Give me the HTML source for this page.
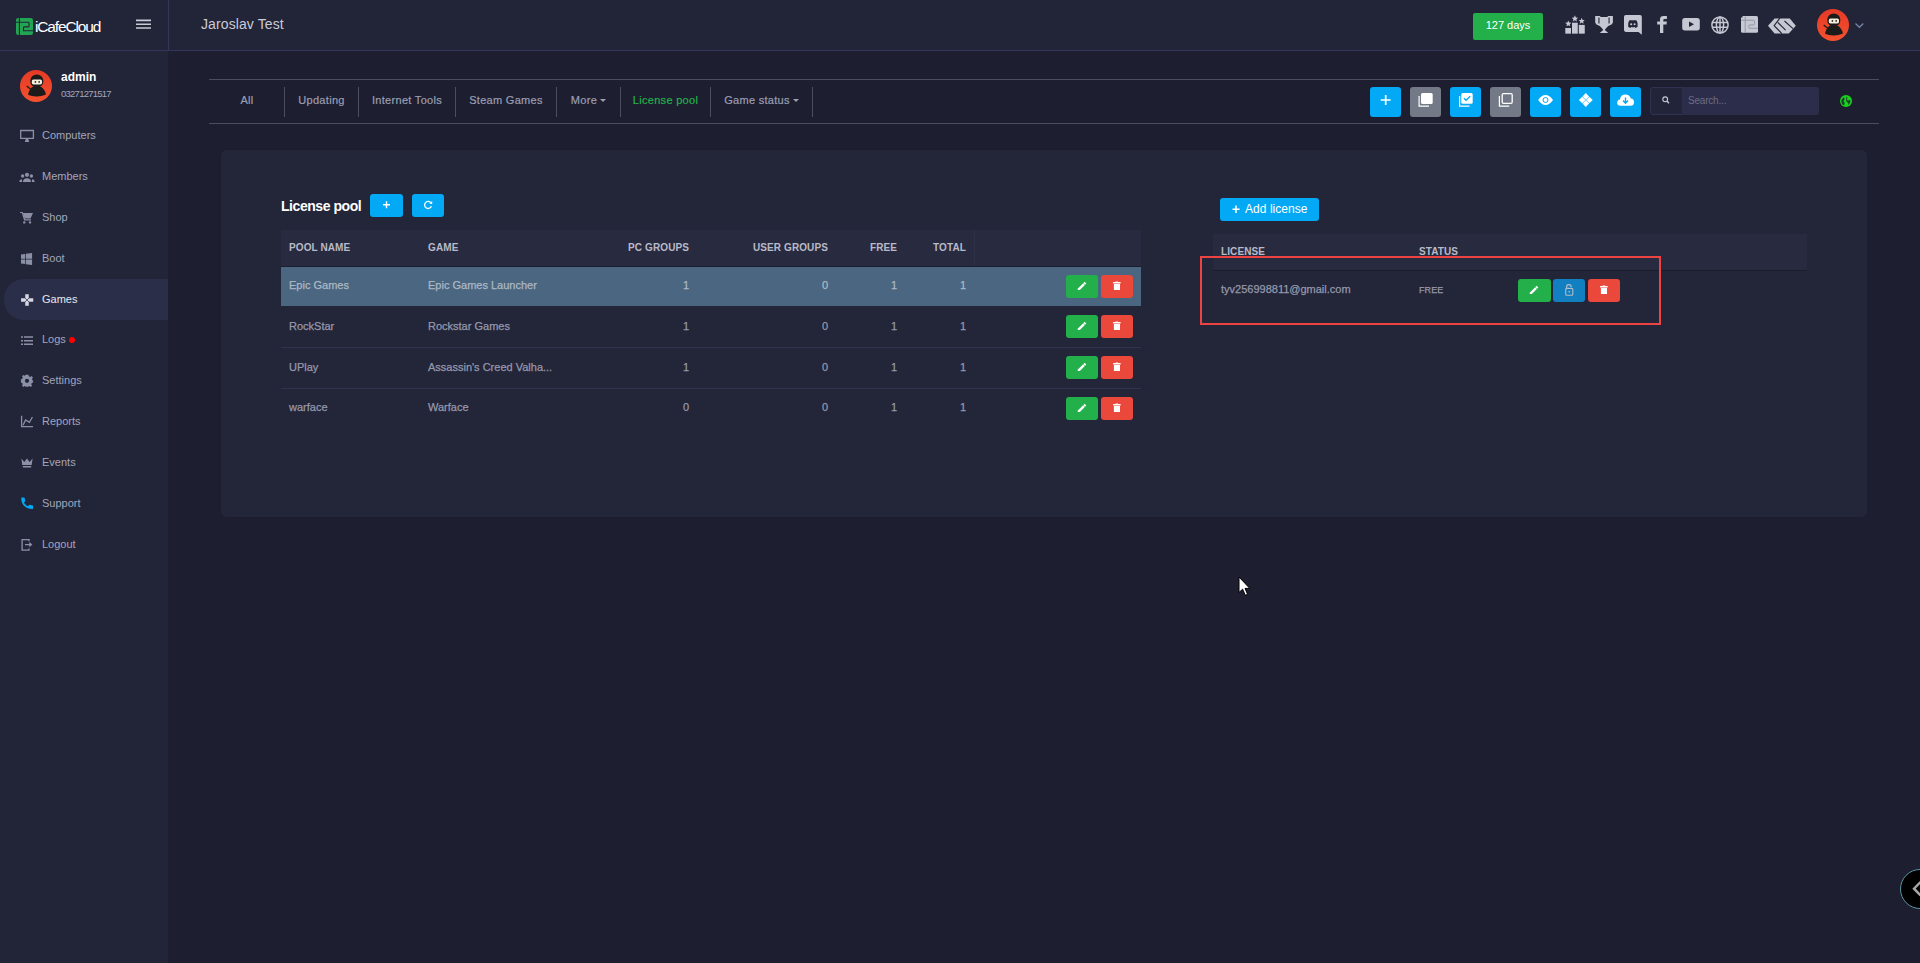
<!DOCTYPE html>
<html><head><meta charset="utf-8"><style>
*{box-sizing:border-box;margin:0;padding:0}
html,body{width:1920px;height:963px;overflow:hidden;background:#1d1e2f;font-family:"Liberation Sans",sans-serif}
.abs{position:absolute}
svg{position:absolute;overflow:visible}
#header{position:absolute;left:0;top:0;width:1920px;height:51px;background:#222438;border-bottom:1px solid #33355a}
#hdiv{position:absolute;left:168px;top:0;width:1px;height:50px;background:#33355a}
#sidebar{position:absolute;left:0;top:51px;width:168px;height:912px;background:#222438}
.nav{position:absolute;left:0;width:168px;height:41px;color:#a3a6ba;font-size:11px}
.nav .tx{position:absolute;left:42px;top:0;line-height:41px}
.nav.active{left:4px;width:164px;background:#2b2e48;border-radius:20px 0 0 20px;color:#e8e9f0}
.nav.active .tx{left:38px}
.tab{position:absolute;top:80px;height:43px;line-height:41px;text-align:center;color:#9c9fb3;font-size:11px;letter-spacing:0.3px;-webkit-text-stroke:0.2px currentColor}
.tdiv{position:absolute;top:87px;width:1px;height:30px;background:#4a4c5f}
.tbtn{position:absolute;top:87px;width:31px;height:30px;border-radius:3px;background:#03a9f4}
.tbtn.g{background:#737987}
#card{position:absolute;left:221px;top:150px;width:1646px;height:367px;background:#232538;border-radius:5px;box-shadow:0 0 2px rgba(0,0,0,0.08)}
.btn{position:absolute;height:23px;border-radius:3px}
.bg{background:#23b04a}
.br{background:#e9483a}
.bb{background:#03a9f4}
.th{position:absolute;font-weight:bold;font-size:10px;color:#b8bac8;letter-spacing:0.1px;line-height:12px}
.td{position:absolute;font-size:11px;color:#9598ac;line-height:14px;-webkit-text-stroke:0.25px currentColor}
</style></head><body>
<div id="header"></div><div id="hdiv"></div><div id="sidebar"></div>
<svg style="left:16px;top:18px" width="17" height="17" viewBox="0 0 17 17">
<rect x="0" y="0" width="17" height="17" rx="2.2" fill="#22a552"/>
<path d="M3.4 0V17 M0 4.2H12.3Q13 4.2 13 5V8.2Q13 8.9 12.3 8.9H8.2Q7.5 8.9 7.5 9.6V12.7H17" stroke="#222438" stroke-width="1.1" fill="none"/>
</svg>
<div class="abs" style="left:35px;top:15.5px;font-size:15.5px;color:#fff;letter-spacing:-1.15px;line-height:22px">iCafeCloud</div>
<svg style="left:136px;top:18px" width="15" height="12" viewBox="0 0 15 12"><path d="M0 2.4H15M0 6.2H15M0 10H15" stroke="#c9cad3" stroke-width="1.6"/></svg>
<div class="abs" style="left:201px;top:15px;font-size:14px;color:#c9cbd6;line-height:18px;letter-spacing:0.1px">Jaroslav Test</div>
<div class="abs" style="left:1473px;top:13px;width:70px;height:27px;background:#23b04a;border-radius:2px;color:#fff;font-size:11px;line-height:25px;text-align:center">127 days</div>
<svg style="left:1562px;top:12px" width="26" height="24" viewBox="0 0 26 24" fill="#c5c8d2">
<rect x="3.3" y="16" width="5.7" height="5.65"/><rect x="10" y="10.7" width="5.75" height="10.95"/><rect x="16.8" y="12.9" width="5.95" height="8.75"/>
<path transform="translate(6.3,11.6) scale(0.9)" d="M0-3.5L1 -1.1 3.4-1 1.6 0.6 2.1 3 0 1.8 -2.1 3 -1.6 0.6 -3.4-1 -1-1.1Z"/>
<path transform="translate(12.9,6.6) scale(0.95)" d="M0-3.5L1 -1.1 3.4-1 1.6 0.6 2.1 3 0 1.8 -2.1 3 -1.6 0.6 -3.4-1 -1-1.1Z"/>
<path transform="translate(19.7,9) scale(0.9)" d="M0-3.5L1 -1.1 3.4-1 1.6 0.6 2.1 3 0 1.8 -2.1 3 -1.6 0.6 -3.4-1 -1-1.1Z"/>
</svg>
<svg style="left:1595px;top:15px" width="19" height="19" viewBox="0 0 19 19" fill="#c5c8d2">
<path fill-rule="evenodd" d="M0.2 1H5Q5.3 2 6 2H12Q12.7 2 13 1H17.9V7.5Q17.2 9.8 15 10.2Q13 10.5 11.8 12.5L10 14.6V15.2L12.8 17.5V18H5.2V17.5L8 15.2V14.6L6.2 12.5Q5 10.5 3 10.2Q0.8 9.8 0.2 7.5Z M3.4 2.6H4.5V8.5H3.4Z M13.5 2.6H14.6V8.5H13.5Z"/>
</svg>
<svg style="left:1624px;top:15px" width="19" height="20" viewBox="0 0 19 20">
<path d="M1.8 0H16Q17.8 0 17.8 1.8V19.7L14.5 16.9H1.8Q0 16.9 0 15.1V1.8Q0 0 1.8 0Z" fill="#c5c8d2"/>
<path d="M4.2 11.8Q3.6 8 5.2 5.6Q6.6 4.9 7.3 4.9L7.6 5.5Q8.9 5.2 10.2 5.5L10.5 4.9Q11.2 4.9 12.6 5.6Q14.2 8 13.6 11.8Q12.4 12.8 11.3 12.9L10.8 12.1Q9 12.6 7 12.1L6.5 12.9Q5.4 12.8 4.2 11.8Z" fill="#222438"/>
<circle cx="7.2" cy="9.2" r="1.05" fill="#c5c8d2"/><circle cx="10.6" cy="9.2" r="1.05" fill="#c5c8d2"/>
</svg>
<svg style="left:1657px;top:15px" width="11" height="19" viewBox="0 0 11 19">
<path d="M3 18V9.5H0.2V6.5H3V4.3Q3 0.9 6.6 0.9H9.9V3.9H7.5Q6.3 3.9 6.3 5V6.5H9.9L9.5 9.5H6.3V18Z" fill="#c5c8d2"/>
</svg>
<svg style="left:1682px;top:18px" width="18" height="13" viewBox="0 0 18 13">
<rect x="0.2" y="0.1" width="17.6" height="12.3" rx="2.6" fill="#c5c8d2"/>
<path d="M7 3.6L12 6.3 7 8.9Z" fill="#222438"/>
</svg>
<svg style="left:1711px;top:15.5px" width="18" height="18" viewBox="0 0 18 18" fill="none" stroke="#c5c8d2" stroke-width="1.5">
<circle cx="9" cy="9" r="8.1"/><ellipse cx="9" cy="9" rx="3.6" ry="8.1"/><path d="M9 1V17M1.2 6.6H16.8M1.2 11.2H16.8"/>
</svg>
<svg style="left:1740.5px;top:16.2px" width="17" height="17" viewBox="0 0 17 17">
<rect x="0" y="0" width="17" height="16.7" rx="1.5" fill="#c5c8d2"/>
<path d="M4.2 0.6V17 M0 4.2H12.3Q13.5 4.2 13.5 5.5V7.6Q13.5 8.9 12.3 8.9H9Q7.8 8.9 7.8 10V11.3Q7.8 12.3 9 12.3H17" stroke="#8f919e" stroke-width="0.9" fill="none"/>
<path d="M0 0.1L1.5 0.1 1.5 1.5 0 1.5Z" fill="#222438"/>
</svg>
<svg style="left:1768px;top:17.5px" width="28" height="16" viewBox="0 0 28 16" fill="#c5c8d2">
<path d="M0 7.8L6.6 0.5H21.8L27.8 7.8 20.8 15.4H6.6Z"/>
<path d="M11.9 0.2L6.1 7.6 13.9 15.6M9.8 4.4L17.6 12.2M16.5 3L25 10.6" stroke="#222438" stroke-width="1.1" fill="none"/>
</svg>
<svg style="left:1817px;top:9px" width="32" height="32" viewBox="0 0 32 32">
<defs><linearGradient id="rg1817" x1="0" y1="0" x2="0" y2="1"><stop offset="0" stop-color="#e63a26"/><stop offset="1" stop-color="#f4512f"/></linearGradient></defs>
<circle cx="16" cy="16" r="16" fill="url(#rg1817)"/>
<path d="M6.7 16L11 19.5" stroke="#1b1b1b" stroke-width="1.3"/>
<path d="M12.2 17Q16.8 15.6 21.3 17Q25 19.5 26 24.5Q21 26.8 16.5 26.6Q11.5 26.6 8 24.8Q9 19.5 12.2 17Z" fill="#1b1b1b"/>
<circle cx="16.8" cy="11" r="6.6" fill="#1b1b1b"/>
<rect x="11.8" y="9.4" width="10.2" height="5" rx="1.6" fill="#f6eedc"/>
<circle cx="15.4" cy="11.9" r="0.85" fill="#222"/><circle cx="19.2" cy="11.9" r="0.85" fill="#222"/>
</svg>
<svg style="left:1855px;top:23px" width="9" height="5" viewBox="0 0 9 5"><path d="M0.5 0.5L4.4 4.3 8.3 0.5" stroke="#7b86a8" stroke-width="1.2" fill="none"/></svg>
<svg style="left:20px;top:70px" width="32" height="32" viewBox="0 0 32 32">
<defs><linearGradient id="rg20" x1="0" y1="0" x2="0" y2="1"><stop offset="0" stop-color="#e63a26"/><stop offset="1" stop-color="#f4512f"/></linearGradient></defs>
<circle cx="16" cy="16" r="16" fill="url(#rg20)"/>
<path d="M6.7 16L11 19.5" stroke="#1b1b1b" stroke-width="1.3"/>
<path d="M12.2 17Q16.8 15.6 21.3 17Q25 19.5 26 24.5Q21 26.8 16.5 26.6Q11.5 26.6 8 24.8Q9 19.5 12.2 17Z" fill="#1b1b1b"/>
<circle cx="16.8" cy="11" r="6.6" fill="#1b1b1b"/>
<rect x="11.8" y="9.4" width="10.2" height="5" rx="1.6" fill="#f6eedc"/>
<circle cx="15.4" cy="11.9" r="0.85" fill="#222"/><circle cx="19.2" cy="11.9" r="0.85" fill="#222"/>
</svg>
<div class="abs" style="left:61px;top:70px;font-size:12px;font-weight:bold;color:#fff;line-height:14px">admin</div>
<div class="abs" style="left:61px;top:88px;font-size:9.5px;color:#a3a6ba;line-height:12px;letter-spacing:-0.75px">03271271517</div>
<div class="nav" style="top:115px"><div class="tx">Computers</div></div>
<svg style="left:16px;top:125px" width="24" height="24" viewBox="0 0 24 24"><path d="M4.7 5.5H17.4V13.4H4.7Z" stroke="#8c90a6" stroke-width="1.3" fill="none"/><path d="M9.8 14H12.2L13.2 17H8.8Z" fill="#8c90a6"/></svg>
<div class="nav" style="top:156px"><div class="tx">Members</div></div>
<svg style="left:16px;top:165px" width="24" height="24" viewBox="0 0 24 24"><circle cx="11" cy="9.8" r="2.1" fill="#8c90a6"/><circle cx="6.6" cy="11" r="1.7" fill="#8c90a6"/><circle cx="15.4" cy="11" r="1.7" fill="#8c90a6"/><path d="M7 17Q7 13.3 11 13.3Q15 13.3 15 17Z M3.3 17Q3.5 14.3 5.8 14.3L6.2 17Z M18.7 17Q18.5 14.3 16.2 14.3L15.8 17Z" fill="#8c90a6"/></svg>
<div class="nav" style="top:197px"><div class="tx">Shop</div></div>
<svg style="left:16px;top:206px" width="24" height="24" viewBox="0 0 24 24"><path d="M4 6.5H6.3L8.6 13.8H15" stroke="#8c90a6" stroke-width="1.2" fill="none"/><path d="M6.8 7H17L14.5 12.4H8.6Z" fill="#8c90a6"/><circle cx="8.3" cy="16.4" r="1.2" fill="#8c90a6"/><circle cx="14" cy="16.4" r="1.2" fill="#8c90a6"/></svg>
<div class="nav" style="top:238px"><div class="tx">Boot</div></div>
<svg style="left:16px;top:247px" width="24" height="24" viewBox="0 0 24 24"><path d="M5 7.4L9.1 6.9V11.7H5Z M9.8 6.8L16.1 6V11.7H9.8Z M5 12.4H9.1V17.1L5 16.6Z M9.8 12.4H16.1V18L9.8 17.2Z" fill="#8c90a6"/></svg>
<div class="nav active" style="top:279px"><div class="tx">Games</div></div>
<svg style="left:16px;top:288px" width="24" height="24" viewBox="0 0 24 24"><g transform="translate(11,12) scale(0.93) translate(-11,-12)"><path d="M9.1 5.8H12.9V10.1L11 12 9.1 10.1Z M9.1 18.1H12.9V13.9L11 12 9.1 13.9Z M4.6 10.1H9.1L11 12 9.1 13.9H4.6Z M17.7 10.1H12.9L11 12 12.9 13.9H17.7Z" fill="#d5d7e2"/><path d="M8.6 9.6L13.4 14.4M13.4 9.6L8.6 14.4" stroke="#2b2e48" stroke-width="0.8"/></g></svg>
<div class="nav" style="top:319px"><div class="tx">Logs</div></div>
<svg style="left:16px;top:328px" width="24" height="24" viewBox="0 0 24 24"><path d="M5 9.1H7M8 9.1H17M5 12.7H7M8 12.7H17M5 16.2H7M8 16.2H17" stroke="#8c90a6" stroke-width="1.5"/></svg>
<div class="nav" style="top:360px"><div class="tx">Settings</div></div>
<svg style="left:16px;top:369px" width="24" height="24" viewBox="0 0 24 24"><g transform="translate(11,11.8)"><path fill-rule="evenodd" fill="#8c90a6" d="M-1.5-6H1.5L1.8-4.5 3.3-3.8 4.6-4.8 6-3.2 5-2 5.6-0.3 6.1 0V1.8L4.7 2.2 4.3 3.6 5.1 4.9 3.6 6.1 2.4 5.3 1.5 5.8 1.2 6H-1.2L-1.6 5.6-2.5 5.2-3.6 6.1-5.1 4.8-4.3 3.6-4.8 2.1-6.1 1.8V-1.5L-4.8-1.9-4.2-3.3-5-4.6-3.5-5.9-2.3-5.1-1.8-5.4Z M0-2.1A2.1 2.1 0 1 0 0 2.1A2.1 2.1 0 1 0 0-2.1Z"/></g></svg>
<div class="nav" style="top:401px"><div class="tx">Reports</div></div>
<svg style="left:16px;top:410px" width="24" height="24" viewBox="0 0 24 24"><path d="M5.6 5.8V16.6H17" stroke="#8c90a6" stroke-width="1.3" fill="none"/><path d="M7 15.2L9.6 9.9 13.4 12.3 16.4 7" stroke="#8c90a6" stroke-width="1.3" fill="none"/></svg>
<div class="nav" style="top:442px"><div class="tx">Events</div></div>
<svg style="left:16px;top:451px" width="24" height="24" viewBox="0 0 24 24"><path d="M5.4 7.6L8.3 11 11 7.6 13.6 11 16.6 7.6 15.7 14H6.2Z M6.8 14.9H15.2V16.6H6.8Z" fill="#8c90a6"/></svg>
<div class="nav" style="top:483px"><div class="tx">Support</div></div>
<svg style="left:16px;top:492px" width="24" height="24" viewBox="0 0 24 24"><path d="M5.2 6.2Q5 5.6 5.8 5.6H8.5L9.3 9.3 7.9 10.5Q9.1 13.2 12 14.3L13.3 12.8 17 13.6V16.4Q17 17.1 16.3 17.1Q10.7 17 7.3 13.1Q5.1 10.3 5.2 6.2Z" fill="#03a9f4"/></svg>
<div class="nav" style="top:524px"><div class="tx">Logout</div></div>
<svg style="left:16px;top:533px" width="24" height="24" viewBox="0 0 24 24"><path d="M13 8.2V6.6H6.1V17.2H13V15.6" stroke="#8c90a6" stroke-width="1.3" fill="none"/><path d="M9 10.9H13.3V9L16.4 11.6 13.3 14.2V12.3H9Z" fill="#8c90a6"/></svg>
<div class="abs" style="left:69px;top:337px;width:6px;height:6px;border-radius:50%;background:#f00"></div>
<div class="abs" style="left:209px;top:79px;width:1670px;height:1px;background:#4a4c5f"></div>
<div class="abs" style="left:209px;top:123px;width:1670px;height:1px;background:#4a4c5f"></div>
<div class="tab" style="left:210px;width:74px">All</div>
<div class="tdiv" style="left:284px"></div>
<div class="tab" style="left:285px;width:73px">Updating</div>
<div class="tdiv" style="left:358px"></div>
<div class="tab" style="left:359px;width:96px">Internet Tools</div>
<div class="tdiv" style="left:455px"></div>
<div class="tab" style="left:456px;width:100px">Steam Games</div>
<div class="tdiv" style="left:556px"></div>
<div class="tab" style="left:557px;width:63px">More<span style="display:inline-block;width:0;height:0;border-left:3px solid transparent;border-right:3px solid transparent;border-top:3px solid #9c9fb3;margin-left:3px;vertical-align:2px"></span></div>
<div class="tdiv" style="left:620px"></div>
<div class="tab" style="left:621px;width:89px;color:#22b14c">License pool</div>
<div class="tdiv" style="left:710px"></div>
<div class="tab" style="left:711px;width:101px">Game status<span style="display:inline-block;width:0;height:0;border-left:3px solid transparent;border-right:3px solid transparent;border-top:3px solid #9c9fb3;margin-left:3px;vertical-align:2px"></span></div>
<div class="tdiv" style="left:812px"></div>
<div class="tbtn " style="left:1370px"><svg style="left:0;top:0" width="31" height="30" viewBox="0 0 31 30"><path d="M15.7 8V18M10.7 13H20.7" stroke="#fff" stroke-width="1.7"/></svg></div>
<div class="tbtn g" style="left:1410px"><svg style="left:0;top:0" width="31" height="30" viewBox="0 0 31 30"><path d="M9.1 9V19.1H19" stroke="#fff" stroke-width="1.2" fill="none"/><rect x="11" y="6" width="11.7" height="11" rx="1.5" fill="#fff"/></svg></div>
<div class="tbtn " style="left:1450px"><svg style="left:0;top:0" width="31" height="30" viewBox="0 0 31 30"><path d="M9.6 9V19.1H19.5" stroke="#fff" stroke-width="1.2" fill="none"/><rect x="11.3" y="6" width="11.4" height="10.8" rx="1.5" fill="#fff"/><path d="M13.9 11.3L16 13.3 20.3 9.2" stroke="#03a9f4" stroke-width="1.2" fill="none"/></svg></div>
<div class="tbtn g" style="left:1490px"><svg style="left:0;top:0" width="31" height="30" viewBox="0 0 31 30"><path d="M9.4 9V19.1H19.2" stroke="#fff" stroke-width="1.2" fill="none"/><rect x="12.2" y="6.7" width="10" height="9.6" rx="1.2" stroke="#fff" stroke-width="1.3" fill="none"/></svg></div>
<div class="tbtn " style="left:1530px"><svg style="left:0;top:0" width="31" height="30" viewBox="0 0 31 30"><path d="M8.2 13Q11.5 8 15.5 8Q19.5 8 23 13Q19.5 18 15.5 18Q11.5 18 8.2 13Z" fill="#fff"/><circle cx="15.5" cy="13" r="2.5" stroke="#03a9f4" stroke-width="1" fill="none"/></svg></div>
<div class="tbtn " style="left:1570px"><svg style="left:0;top:0" width="31" height="30" viewBox="0 0 31 30"><path d="M15.8 6.1L19.1 9.4 15.8 12.7 12.5 9.4Z M15.8 13.3L19.1 16.6 15.8 19.9 12.5 16.6Z M12.2 9.7L15.5 13 12.2 16.3 8.9 13Z M19.4 9.7L22.7 13 19.4 16.3 16.1 13Z" fill="#fff"/></svg></div>
<div class="tbtn " style="left:1610px"><svg style="left:0;top:0" width="31" height="30" viewBox="0 0 31 30"><path d="M10.5 18.8Q7.2 18.8 7.2 15.8Q7.2 13 10 12.6Q10.6 7.5 15.5 7.5Q19.5 7.5 20.8 11.5Q24 11.8 24 15.2Q24 18.8 20.5 18.8Z" fill="#fff"/><path d="M15.5 10.5V15.8M13 13.6L15.5 16.2 18 13.6" stroke="#03a9f4" stroke-width="1.4" fill="none"/></svg></div>
<div class="abs" style="left:1650px;top:87px;width:169px;height:28px;border:1px solid #303251;border-radius:3px;background:#22243a"></div>
<div class="abs" style="left:1682px;top:87px;width:137px;height:28px;background:#2b2d4b;border-radius:0 3px 3px 0"></div>
<svg style="left:1660px;top:94px" width="12" height="12" viewBox="0 0 12 12"><circle cx="5.2" cy="5.3" r="2.4" stroke="#c9cbd6" stroke-width="1.1" fill="none"/><path d="M6.9 7L9 9.2" stroke="#c9cbd6" stroke-width="1.3"/></svg>
<div class="abs" style="left:1688px;top:94px;font-size:10px;color:#6b6d82;line-height:14px;letter-spacing:-0.2px">Search...</div>
<svg style="left:1840px;top:95px" width="12" height="12" viewBox="0 0 12 12"><circle cx="6" cy="6" r="6" fill="#18d418"/><path d="M3.5 2.2Q5 3 4.6 4.6Q3.2 5.2 3.8 6.6Q5 7.5 4.6 9.6L3 10.2Q1 8 1.3 5Z M6.5 1.5Q8 2.5 7.3 3.6Q6.3 4.3 7.5 5.5Q9 5.8 9.8 4.8L10.5 6Q10.3 8.5 8.3 10.3Q8.8 8 7.3 7.3Q6 6.5 6 4.8Z" fill="#222438" opacity="0.85"/></svg>
<div id="card"></div>
<div class="abs" style="left:281px;top:197px;font-size:14px;font-weight:bold;color:#fff;letter-spacing:-0.45px;line-height:18px">License pool</div>
<div class="btn bb" style="left:370px;top:194px;width:33px"><svg style="left:0;top:0" width="33" height="23" viewBox="0 0 33 23"><path d="M16.5 7.2V14.2M13 10.7H20" stroke="#fff" stroke-width="1.4"/></svg></div>
<div class="btn bb" style="left:412px;top:194px;width:32px"><svg style="left:0;top:0" width="32" height="23" viewBox="0 0 32 23"><path d="M18.7 8.6A3.5 3.5 0 1 0 19.4 12.2" stroke="#fff" stroke-width="1.3" fill="none"/><path d="M17.3 9.8L20.2 7 20.2 10.1Z" fill="#fff"/></svg></div>
<div class="abs" style="left:281px;top:230px;width:860px;height:36px;background:#282a3f"></div>
<div class="abs" style="left:974px;top:230px;width:1px;height:36px;background:#2e3046"></div>
<div class="abs" style="left:281px;top:266px;width:860px;height:1px;background:#1c1d2c"></div>
<div class="abs" style="left:281px;top:267px;width:860px;height:39px;background:#4a6680"></div>
<div class="abs" style="left:281px;top:347px;width:860px;height:1px;background:#31334f"></div>
<div class="abs" style="left:281px;top:388px;width:860px;height:1px;background:#31334f"></div>
<div class="th" style="left:289px;top:242px">POOL NAME</div>
<div class="th" style="left:428px;top:242px">GAME</div>
<div class="th" style="left:569px;width:120px;top:242px;text-align:right">PC GROUPS</div>
<div class="th" style="left:708px;width:120px;top:242px;text-align:right">USER GROUPS</div>
<div class="th" style="left:777px;width:120px;top:242px;text-align:right">FREE</div>
<div class="th" style="left:846px;width:120px;top:242px;text-align:right">TOTAL</div>
<div class="td" style="left:289px;top:278px;color:#adb8c5">Epic Games</div>
<div class="td" style="left:428px;top:278px;color:#adb8c5">Epic Games Launcher</div>
<div class="td" style="left:629px;width:60px;text-align:right;top:278px;color:#adb8c5">1</div>
<div class="td" style="left:768px;width:60px;text-align:right;top:278px;color:#adb8c5">0</div>
<div class="td" style="left:837px;width:60px;text-align:right;top:278px;color:#adb8c5">1</div>
<div class="td" style="left:906px;width:60px;text-align:right;top:278px;color:#adb8c5">1</div>
<div class="btn bg" style="left:1066px;top:275px;width:32px"><svg style="left:0;top:0" width="32" height="23" viewBox="0 0 32 23"><path d="M11.6 15.1L12.1 13.2 18.6 6.7 20.3 8.4 13.8 14.9Z" fill="#fff"/><path d="M17.2 8.1L18.9 9.8" stroke="#23b04a" stroke-width="0.6"/></svg></div>
<div class="btn br" style="left:1101px;top:275px;width:32px"><svg style="left:0;top:0" width="32" height="23" viewBox="0 0 32 23"><path d="M12.1 7.1H19.6V8.5H12.1Z M12.9 9H19V15H12.9Z M14.6 6.5H17.1V7.1H14.6Z" fill="#fff"/></svg></div>
<div class="td" style="left:289px;top:319px;color:#9598ac">RockStar</div>
<div class="td" style="left:428px;top:319px;color:#9598ac">Rockstar Games</div>
<div class="td" style="left:629px;width:60px;text-align:right;top:319px;color:#9598ac">1</div>
<div class="td" style="left:768px;width:60px;text-align:right;top:319px;color:#9598ac">0</div>
<div class="td" style="left:837px;width:60px;text-align:right;top:319px;color:#9598ac">1</div>
<div class="td" style="left:906px;width:60px;text-align:right;top:319px;color:#9598ac">1</div>
<div class="btn bg" style="left:1066px;top:315px;width:32px"><svg style="left:0;top:0" width="32" height="23" viewBox="0 0 32 23"><path d="M11.6 15.1L12.1 13.2 18.6 6.7 20.3 8.4 13.8 14.9Z" fill="#fff"/><path d="M17.2 8.1L18.9 9.8" stroke="#23b04a" stroke-width="0.6"/></svg></div>
<div class="btn br" style="left:1101px;top:315px;width:32px"><svg style="left:0;top:0" width="32" height="23" viewBox="0 0 32 23"><path d="M12.1 7.1H19.6V8.5H12.1Z M12.9 9H19V15H12.9Z M14.6 6.5H17.1V7.1H14.6Z" fill="#fff"/></svg></div>
<div class="td" style="left:289px;top:360px;color:#9598ac">UPlay</div>
<div class="td" style="left:428px;top:360px;color:#9598ac">Assassin's Creed Valha...</div>
<div class="td" style="left:629px;width:60px;text-align:right;top:360px;color:#9598ac">1</div>
<div class="td" style="left:768px;width:60px;text-align:right;top:360px;color:#9598ac">0</div>
<div class="td" style="left:837px;width:60px;text-align:right;top:360px;color:#9598ac">1</div>
<div class="td" style="left:906px;width:60px;text-align:right;top:360px;color:#9598ac">1</div>
<div class="btn bg" style="left:1066px;top:356px;width:32px"><svg style="left:0;top:0" width="32" height="23" viewBox="0 0 32 23"><path d="M11.6 15.1L12.1 13.2 18.6 6.7 20.3 8.4 13.8 14.9Z" fill="#fff"/><path d="M17.2 8.1L18.9 9.8" stroke="#23b04a" stroke-width="0.6"/></svg></div>
<div class="btn br" style="left:1101px;top:356px;width:32px"><svg style="left:0;top:0" width="32" height="23" viewBox="0 0 32 23"><path d="M12.1 7.1H19.6V8.5H12.1Z M12.9 9H19V15H12.9Z M14.6 6.5H17.1V7.1H14.6Z" fill="#fff"/></svg></div>
<div class="td" style="left:289px;top:400px;color:#9598ac">warface</div>
<div class="td" style="left:428px;top:400px;color:#9598ac">Warface</div>
<div class="td" style="left:629px;width:60px;text-align:right;top:400px;color:#9598ac">0</div>
<div class="td" style="left:768px;width:60px;text-align:right;top:400px;color:#9598ac">0</div>
<div class="td" style="left:837px;width:60px;text-align:right;top:400px;color:#9598ac">1</div>
<div class="td" style="left:906px;width:60px;text-align:right;top:400px;color:#9598ac">1</div>
<div class="btn bg" style="left:1066px;top:397px;width:32px"><svg style="left:0;top:0" width="32" height="23" viewBox="0 0 32 23"><path d="M11.6 15.1L12.1 13.2 18.6 6.7 20.3 8.4 13.8 14.9Z" fill="#fff"/><path d="M17.2 8.1L18.9 9.8" stroke="#23b04a" stroke-width="0.6"/></svg></div>
<div class="btn br" style="left:1101px;top:397px;width:32px"><svg style="left:0;top:0" width="32" height="23" viewBox="0 0 32 23"><path d="M12.1 7.1H19.6V8.5H12.1Z M12.9 9H19V15H12.9Z M14.6 6.5H17.1V7.1H14.6Z" fill="#fff"/></svg></div>
<div class="btn bb" style="left:1220px;top:198px;width:99px"></div>
<svg style="left:1232px;top:205px" width="9" height="9" viewBox="0 0 9 9"><path d="M4 0.5V8M0.5 4.3H7.6" stroke="#fff" stroke-width="1.5"/></svg>
<div class="abs" style="left:1245px;top:202px;color:#fff;font-size:12px;line-height:14px;letter-spacing:0.05px">Add license</div>
<div class="abs" style="left:1213px;top:234px;width:594px;height:36px;background:#282a3f"></div>
<div class="abs" style="left:1213px;top:270px;width:594px;height:1px;background:#1c1d2c"></div>
<div class="th" style="left:1221px;top:246px">LICENSE</div>
<div class="th" style="left:1419px;top:246px">STATUS</div>
<div class="td" style="left:1221px;top:282px">tyv256998811@gmail.com</div>
<div class="td" style="left:1419px;top:282.5px;font-size:9px;letter-spacing:0.1px">FREE</div>
<div class="btn bg" style="left:1518px;top:279px;width:33px"><svg style="left:0;top:0" width="33" height="23" viewBox="0 0 33 23"><path d="M11.6 15.1L12.1 13.2 18.6 6.7 20.3 8.4 13.8 14.9Z" fill="#fff"/><path d="M17.2 8.1L18.9 9.8" stroke="#23b04a" stroke-width="0.6"/></svg></div>
<div class="btn" style="left:1553px;top:279px;width:32px;background:#127fc0"><svg style="left:0;top:0" width="32" height="23" viewBox="0 0 32 23"><path d="M13.6 9.4V7.9Q13.6 5.6 15.9 5.6Q18.2 5.6 18.2 7.9" stroke="#b4bcc8" stroke-width="1.1" fill="none"/><rect x="12.7" y="9.4" width="7.1" height="6.8" rx="1" stroke="#b4bcc8" stroke-width="1.1" fill="none"/><rect x="15.6" y="12" width="1.4" height="1.4" fill="#b4bcc8"/></svg></div>
<div class="btn br" style="left:1588px;top:279px;width:32px"><svg style="left:0;top:0" width="32" height="23" viewBox="0 0 32 23"><path d="M12.1 7.1H19.6V8.5H12.1Z M12.9 9H19V15H12.9Z M14.6 6.5H17.1V7.1H14.6Z" fill="#fff"/></svg></div>
<div class="abs" style="left:1200px;top:256px;width:461px;height:69px;border:2px solid #ee4343"></div>
<div class="abs" style="left:1900px;top:869px;width:40px;height:40px;border-radius:50%;background:#000;border:1.5px solid #5b94a6"></div>
<svg style="left:1910px;top:881px" width="12" height="16" viewBox="0 0 12 16"><path d="M10.5 1L4 7.7 10.5 14.4" stroke="#a8a8a8" stroke-width="2.4" fill="none"/></svg>
<svg style="left:1238px;top:576px" width="14" height="22" viewBox="0 0 14 22"><path d="M1 1V16.5L4.6 13.2 7.3 19.3 9.6 18.3 7 12.4H11.8Z" fill="#fff" stroke="#000" stroke-width="1"/></svg>
</body></html>
